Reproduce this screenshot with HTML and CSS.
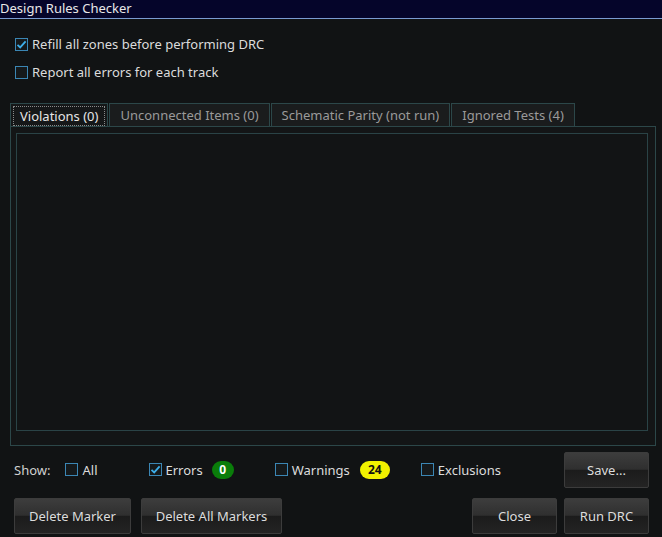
FILE: index.html
```html
<!DOCTYPE html>
<html>
<head>
<meta charset="utf-8">
<link rel="stylesheet" href="styles.css">
</head>
<body>
<div class="window">
  <div class="titlebar">Design Rules Checker</div>
  <div class="content">
    <div class="options">
      <label class="check"><span class="box checked"><svg viewBox="0 0 13 13" width="13" height="13"><path d="M2.5 6.8 L5.2 9.4 L10.6 3.4" fill="none" stroke="#3daee9" stroke-width="1.8"/></svg></span>Refill all zones before performing DRC</label>
      <label class="check"><span class="box"></span>Report all errors for each track</label>
    </div>
    <div class="tabs">
      <div class="tab active"><span class="focus">Violations (0)</span></div>
      <div class="tab">Unconnected Items (0)</div>
      <div class="tab">Schematic Parity (not run)</div>
      <div class="tab">Ignored Tests (4)</div>
    </div>
    <div class="pane">
      <div class="list"></div>
    </div>
    <div class="showrow">
      <span class="showlabel">Show:</span>
      <label class="check c-all"><span class="box"></span>All</label>
      <label class="check c-err"><span class="box checked"><svg viewBox="0 0 13 13" width="13" height="13"><path d="M2.5 6.8 L5.2 9.4 L10.6 3.4" fill="none" stroke="#3daee9" stroke-width="1.8"/></svg></span>Errors</label>
      <span class="badge green">0</span>
      <label class="check c-warn"><span class="box"></span>Warnings</label>
      <span class="badge yellow">24</span>
      <label class="check c-excl"><span class="box"></span>Exclusions</label>
      <span class="spacer"></span>
      <button class="btn save">Save...</button>
    </div>
    <div class="buttonrow">
      <button class="btn b-del">Delete Marker</button>
      <button class="btn b-delall">Delete All Markers</button>
      <span class="spacer"></span>
      <button class="btn b-close">Close</button>
      <button class="btn b-run">Run DRC</button>
    </div>
  </div>
</div>
</body>
</html>
```
FILE: styles.css
```css
* { box-sizing: border-box; }
html, body {
  margin: 0;
  padding: 0;
  background: #111314;
}
body {
  width: 662px;
  height: 537px;
  overflow: hidden;
  font-family: "Noto Sans", "DejaVu Sans", sans-serif;
  font-size: 13px;
  color: #dcdcdc;
}
.window {
  display: flex;
  flex-direction: column;
  height: 537px;
}
.titlebar {
  height: 19px;
  background: #05052a;
  border-bottom: 1px solid #7a9bd0;
  color: #e8e8e8;
  font-size: 13px;
  line-height: 17px;
  padding-left: 0;
}
.content {
  display: flex;
  flex-direction: column;
  padding: 0 6px 0 10px;
  flex: 1;
}
.options {
  display: flex;
  flex-direction: column;
  padding: 15px 0 0 5px;
  gap: 8px;
}
.check {
  display: flex;
  align-items: center;
  height: 20px;
  gap: 4px;
  white-space: nowrap;
}
.box {
  width: 13px;
  height: 13px;
  border: 1px solid #3b86b4;
  background: #15191b;
  display: inline-flex;
  align-items: center;
  justify-content: center;
  flex: none;
}
.box svg { display: block; margin: -1px; }
.tabs {
  display: flex;
  margin-top: 21px;
  height: 23px;
}
.tab {
  height: 23px;
  padding: 0 10px;
  line-height: 22px;
  color: #9a9a9a;
  background: #1a1c1d;
  border: 1px solid #2c4749;
  border-bottom: none;
  margin-right: 1px;
  white-space: nowrap;
}
.tab.active {
  color: #e6e6e6;
  background: #151718;
  padding: 2px 2px 0;
  line-height: 18px;
}
.tab.active .focus {
  display: block;
  border: 1px dotted #8a8a8a;
  padding: 0 6px;
  height: 20px;
  line-height: 18px;
}
.pane {
  height: 320px;
  border: 1px solid #2c4749;
  padding: 6px 7px 14px 5px;
  background: #131516;
}
.list {
  height: 100%;
  border: 1px solid #2a4346;
  background: #121415;
}
.showrow {
  display: flex;
  align-items: center;
  height: 35px;
  margin-top: 6px;
  padding-left: 4px;
}
.showlabel { color: #d0d0d0; }
.c-all { margin-left: 15px; }
.c-err { margin-left: 51px; }
.badge {
  display: inline-block;
  height: 18px;
  line-height: 18px;
  border-radius: 9px;
  font-weight: bold;
  text-align: center;
  font-size: 12px;
}
.badge.green {
  background: #0a7d0a;
  color: #ffffff;
  width: 22px;
  margin-left: 9px;
}
.badge.yellow {
  background: #f2f200;
  color: #111;
  width: 30px;
  margin-left: 10px;
}
.c-warn { margin-left: 41px; }
.c-excl { margin-left: 31px; }
.spacer { flex: 1; }
.btn {
  font-family: inherit;
  font-size: 13px;
  color: #dcdcdc;
  height: 36px;
  border: 1px solid #3c3c3c;
  border-radius: 2px;
  background: linear-gradient(to bottom, #3d3d3d 0%, #2f2f2f 48%, #1b1b1b 50%, #242424 100%);
  padding: 0;
  text-align: center;
}
.save { width: 85px; margin-right: 7px; }
.buttonrow {
  display: flex;
  align-items: center;
  margin-top: 11px;
  padding-left: 4px;
}
.b-del { width: 117px; }
.b-delall { width: 141px; margin-left: 10px; }
.b-close { width: 85px; }
.b-run { width: 85px; margin-left: 7px; margin-right: 7px; }
```
